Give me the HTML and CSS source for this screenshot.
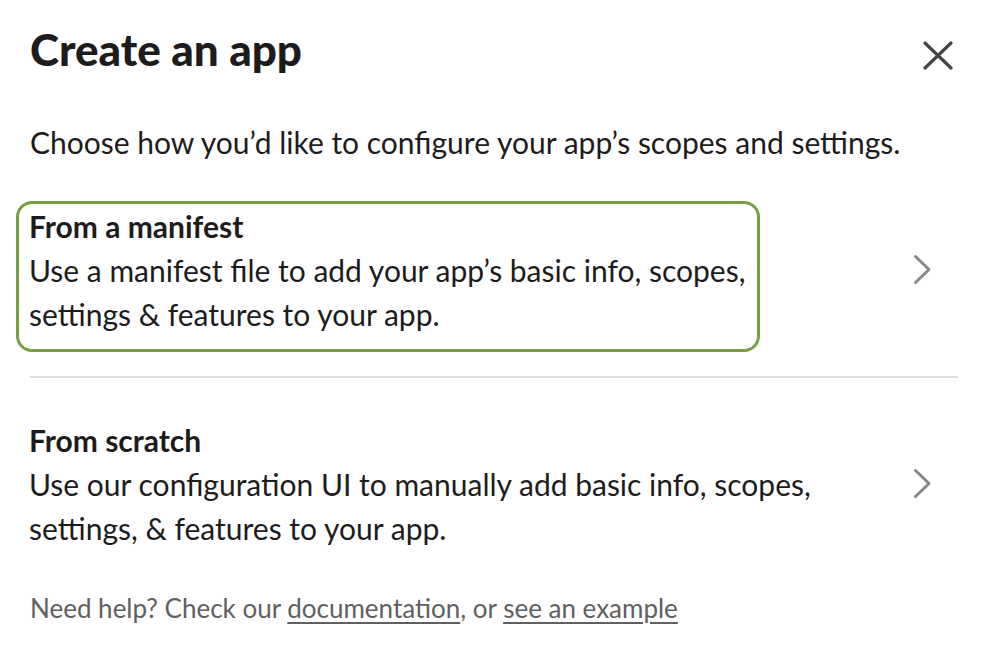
FILE: index.html
```html
<!DOCTYPE html>
<html lang="en">
<head>
<meta charset="utf-8">
<title>Create an app</title>
<link rel="stylesheet" href="styles.css">
</head>
<body>
<div class="modal">
  <header class="modal-header">
    <h1 class="modal-title">Create an app</h1>
    <button class="close-btn" type="button" aria-label="Close">
      <svg width="30" height="29" viewBox="0 0 30 29" aria-hidden="true">
        <path d="M2 2 L28 27 M28 2 L2 27" fill="none" stroke="#454545" stroke-width="3.2" stroke-linecap="round"/>
      </svg>
    </button>
  </header>

  <p class="intro">Choose how you’d like to configure your app’s scopes and settings.</p>

  <div class="options">
    <a class="option option--focused" href="#">
      <div class="option-main">
        <div class="option-title">From a manifest</div>
        <div class="option-desc">Use a manifest file to add your app’s basic info, scopes, settings &amp; features to your app.</div>
      </div>
      <svg class="chevron" width="19" height="31" viewBox="0 0 19 31" aria-hidden="true">
        <polyline points="2.5,2.5 16,15.5 2.5,28.5" fill="none" stroke="#888888" stroke-width="3" stroke-linecap="round" stroke-linejoin="round"/>
      </svg>
    </a>

    <hr class="divider">

    <a class="option" href="#">
      <div class="option-main">
        <div class="option-title">From scratch</div>
        <div class="option-desc">Use our configuration UI to manually add basic info, scopes, settings, &amp; features to your app.</div>
      </div>
      <svg class="chevron" width="19" height="31" viewBox="0 0 19 31" aria-hidden="true">
        <polyline points="2.5,2.5 16,15.5 2.5,28.5" fill="none" stroke="#888888" stroke-width="3" stroke-linecap="round" stroke-linejoin="round"/>
      </svg>
    </a>
  </div>

  <p class="help">Need help? Check our <a class="help-link" href="#">documentation</a>, or <a class="help-link" href="#">see an example</a></p>
</div>
</body>
</html>
```

FILE: styles.css
```css
html, body {
  margin: 0;
  padding: 0;
  background: #ffffff;
}

body {
  font-family: Lato, "Noto Sans", "Liberation Sans", sans-serif;
  color: #1d1c1d;
}

.modal {
  padding: 23px 24px 0 30px;
}

.modal-header {
  display: flex;
  align-items: flex-start;
  justify-content: space-between;
}

.modal-title {
  margin: 0;
  font-size: 44px;
  line-height: 1.2;
  font-weight: 900;
  letter-spacing: 0;
}

.close-btn {
  border: 0;
  background: transparent;
  padding: 0;
  margin: 18px 5px 0 0;
  display: flex;
  cursor: pointer;
}

.intro {
  margin: 44px 0 0;
  font-size: 30px;
  line-height: 44px;
}

.options {
  margin-top: 37px;
}

.option {
  display: flex;
  align-items: center;
  justify-content: space-between;
  color: inherit;
  text-decoration: none;
}

.option-main {
  box-sizing: border-box;
  max-width: 830px;
  margin-left: -14px;
  padding: 0 4px 13px 10px;
  border: 3px solid transparent;
  border-radius: 16px;
}

.option--focused .option-main {
  width: 744px;
  border-color: #77a044;
}

.option-title {
  font-size: 30px;
  line-height: 44px;
  font-weight: 700;
}

.option-desc {
  font-size: 30px;
  line-height: 44px;
}

.chevron {
  flex: none;
  margin: 0 26px 13px 0;
}

.divider {
  border: 0;
  height: 2px;
  background: #dddddd;
  margin: 24px 0 37px;
}

.help {
  margin: 27px 0 0;
  font-size: 26px;
  line-height: 1.2;
  color: #616061;
}

.help-link {
  color: inherit;
  text-decoration: underline;
  text-decoration-thickness: 2px;
  text-underline-offset: 4px;
}
```
